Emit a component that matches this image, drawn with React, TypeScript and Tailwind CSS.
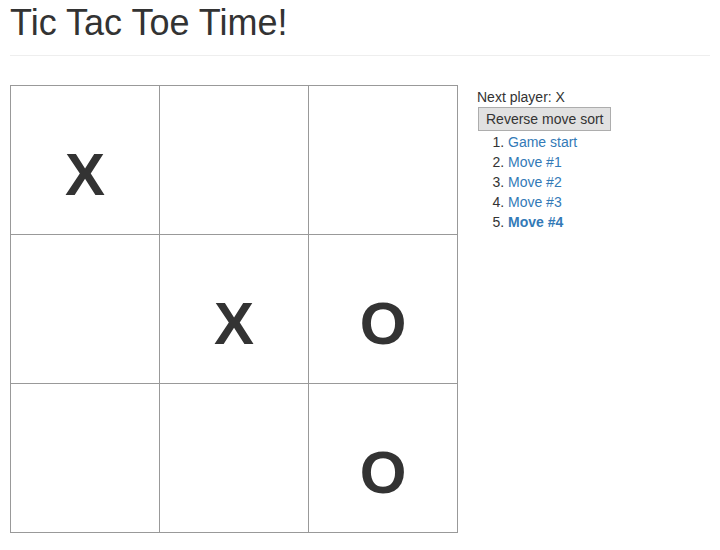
import React from "react";

const board: (string | null)[] = ["X", null, null, null, "X", "O", null, null, "O"];
const moves = ["Game start", "Move #1", "Move #2", "Move #3", "Move #4"];

export default function App() {
  return (
    <div
      className="min-h-[550px] bg-white px-[10px] text-[14px] leading-[20px] text-[#333333]"
      style={{ fontFamily: '"Liberation Sans", Arial, Helvetica, sans-serif' }}
    >
      <h1 className="m-0 border-b border-[#eeeeee] pt-[3px] pb-[12px] text-[36px] font-normal leading-[40px]">
        Tic Tac Toe Time!
      </h1>
      <div className="mt-[29px] flex items-start">
        <div className="grid w-[448px] grid-cols-3 border-l border-t border-[#999999]">
          {board.map((v, i) => (
            <div
              key={i}
              className="flex h-[149px] w-[149px] justify-center border-b border-r border-[#999999] pt-[59px]"
            >
              {v && <span className="text-[60px] font-bold leading-[60px] text-[#333333]">{v}</span>}
            </div>
          ))}
        </div>
        <div className="ml-[19px] mt-[2px]">
          <div>Next player: X</div>
          <button className="ml-[1px] border border-[#adadad] bg-[#e1e1e1] px-[7px] py-[1px] text-[14px] leading-[20px] text-[#333333]">
            Reverse move sort
          </button>
          <ol className="m-0 mt-[1px] list-decimal pl-[31px]">
            {moves.map((m, i) => (
              <li key={m}>
                <a
                  href="#"
                  className={`text-[#337ab7] no-underline ${i === moves.length - 1 ? "font-bold" : ""}`}
                >
                  {m}
                </a>
              </li>
            ))}
          </ol>
        </div>
      </div>
    </div>
  );
}
